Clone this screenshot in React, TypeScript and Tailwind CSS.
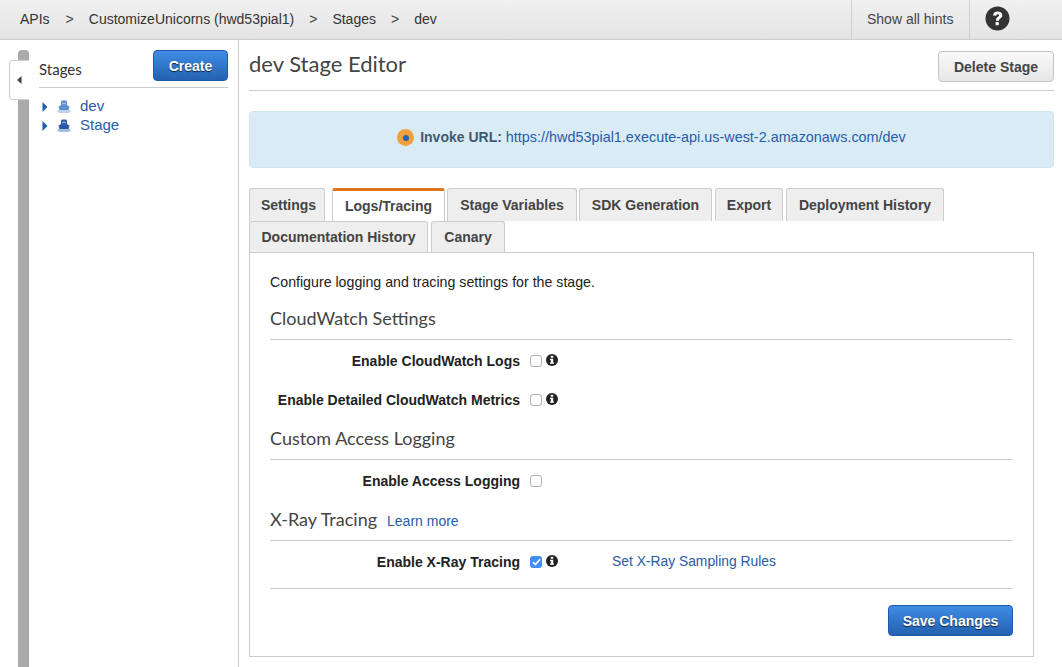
import React from "react";

const sans = "font-['Liberation_Sans',Arial,sans-serif]";
const lato = "font-['Lato',sans-serif]";

const Gt = () => <span className="mx-[15px] text-[14px] text-[#444]">&gt;</span>;

const ShipIcon = ({ color }: { color: string }) => (
  <svg width="14" height="13" viewBox="0 0 14 13" className="shrink-0">
    <path d="M5 0.5h4l1 1.2v3.4l2.5 1.6L11.5 10h-9L1.5 6.7 4 5.1V1.7z" fill={color} />
    <path d="M5.2 2.8h3.6v1.4H5.2z" fill="#fff" opacity="0.5" />
    <path d="M0.5 10.5h13v1h-13z" fill={color} opacity="0.8" />
    <path d="M1.5 12h11v0.8h-11z" fill={color} opacity="0.5" />
  </svg>
);

const TreeRow = ({ label, color }: { label: string; color: string }) => (
  <div className={`flex items-center h-[19px] ${sans}`}>
    <svg width="6" height="10" viewBox="0 0 6 10" className="ml-[3px] mr-[9px] shrink-0">
      <path d="M0.5 0L5.5 5L0.5 10z" fill="#1f5fa8" />
    </svg>
    <ShipIcon color={color} />
    <span className="ml-[9px] text-[15px] text-[#2a5ba8]">{label}</span>
  </div>
);

const InfoIcon = () => (
  <svg width="12" height="12" viewBox="0 0 12 12" className="shrink-0">
    <circle cx="6" cy="6" r="6" fill="#222" />
    <rect x="4.8" y="1.7" width="2.4" height="2.1" rx="0.5" fill="#fff" />
    <path d="M4 4.7h3.2v3.9h0.8v1.2H4V8.6h0.8V5.9H4z" fill="#fff" />
  </svg>
);

const Checkbox = ({ checked }: { checked?: boolean }) =>
  checked ? (
    <span className="w-[12px] h-[12px] rounded-[3px] bg-[#3f8ef0] flex items-center justify-center shrink-0">
      <svg width="9" height="8" viewBox="0 0 9 8">
        <path d="M1 4.2L3.4 6.5L8 1.2" stroke="#fff" strokeWidth="1.6" fill="none" />
      </svg>
    </span>
  ) : (
    <span className="w-[12px] h-[12px] rounded-[3px] border border-[#b0b0b0] bg-white shrink-0" />
  );

const SettingRow = ({
  label,
  checked,
  info,
  className,
  children,
}: {
  label: string;
  checked?: boolean;
  info?: boolean;
  className: string;
  children?: React.ReactNode;
}) => (
  <div className={`flex items-center h-[20px] ${className}`}>
    <div className="w-[250px] text-right text-[14px] font-bold text-[#222] shrink-0">{label}</div>
    <div className="ml-[10px] flex items-center">
      <Checkbox checked={checked} />
      {info && (
        <span className="ml-[4px] -mt-[2px]">
          <InfoIcon />
        </span>
      )}
    </div>
    {children}
  </div>
);

const Tab = ({ label, className, active }: { label: string; className: string; active?: boolean }) =>
  active ? (
    <div
      className={`${className} border-x border-[#ccc] border-t-[3px] border-t-[#dd7417] bg-white rounded-t-[3px] -mb-px relative z-10 flex items-center justify-center text-[14px] font-bold text-[#444]`}
    >
      {label}
    </div>
  ) : (
    <div
      className={`${className} border border-b-0 border-[#ccc] bg-[#eee] rounded-t-[3px] flex items-center justify-center text-[14px] font-bold text-[#444]`}
    >
      {label}
    </div>
  );

const blueBtn =
  "rounded-[4px] border border-[#1f5aa6] bg-gradient-to-b from-[#3f8de6] to-[#2461b0] text-white font-bold text-[14px] pt-[2px] [text-shadow:0_1px_1px_rgba(0,0,0,0.7)] flex items-center justify-center";

const sectionTitle = `border-b border-[#ccc] text-[18px] leading-[24px] text-[#444] ${lato}`;

export default function App() {
  return (
    <div className={`w-[1062px] h-[667px] overflow-hidden bg-white flex flex-col ${sans}`}>
      {/* breadcrumb bar */}
      <div className="h-[40px] shrink-0 flex items-stretch border-b border-[#ccc] bg-gradient-to-b from-[#f0f0f0] to-[#e4e4e4]">
        <div className="flex-1 flex items-center pl-[20px] text-[14px] text-[#333]">
          <span className="mr-[1px]">APIs</span>
          <Gt />
          <span>CustomizeUnicorns (hwd53pial1)</span>
          <Gt />
          <span>Stages</span>
          <Gt />
          <span>dev</span>
        </div>
        <div className="w-[118px] border-l border-[#d0d0d0] flex items-center pl-[15px] text-[14px] text-[#444]">
          Show all hints
        </div>
        <div className="w-[93px] border-l border-[#d0d0d0] flex items-center pl-[15px] pb-[2px]">
          <svg width="25" height="25" viewBox="0 0 25 25">
            <circle cx="12.5" cy="12.5" r="12" fill="#333" />
            <path
              d="M8 9.6c0-2.7 2-4.2 4.7-4.2 2.7 0 4.6 1.6 4.6 3.9 0 1.7-1 2.6-2.1 3.3-.8.6-1.1.9-1.1 1.7v.4h-3.1v-.7c0-1.5.7-2.3 1.7-3 .8-.6 1.3-1 1.3-1.6 0-.7-.6-1.2-1.3-1.2-.9 0-1.4.6-1.5 1.6z"
              fill="#fff"
            />
            <rect x="10.6" y="16" width="3.2" height="3.2" rx="0.4" fill="#fff" />
          </svg>
        </div>
      </div>

      <div className="flex-1 flex min-h-0">
        {/* collapse rail */}
        <div className="relative w-[39px] shrink-0 pl-[18px] pt-[10px]">
          <div className="w-[11px] h-full bg-[#aaa] rounded-t-[4px]" />
          <div className="absolute left-[9px] top-[20px] w-[20px] h-[40px] bg-white border border-r-0 border-[#ccc] rounded-l-[4px] flex items-center justify-center">
            <svg width="5" height="8" viewBox="0 0 5 8">
              <path d="M4.5 0L0 4L4.5 8z" fill="#444" />
            </svg>
          </div>
        </div>

        {/* stages list */}
        <div className="w-[200px] shrink-0 border-r border-[#ccc] pr-[10px]">
          <div className="w-[189px] h-[38px] mt-[10px] flex items-start justify-between border-b border-[#ccc]">
            <span className={`mt-[8px] text-[15px] leading-[22px] text-[#333] ${lato}`}>Stages</span>
            <button className={`${blueBtn} w-[75px] h-[31px]`}>Create</button>
          </div>
          <div className="mt-[9px]">
            <TreeRow label="dev" color="#5b8fd0" />
            <TreeRow label="Stage" color="#2a5ba8" />
          </div>
        </div>

        {/* editor */}
        <div className="flex-1 min-w-0 pl-[10px] pr-[8px]">
          <div className="h-[41px] mt-[10px] flex justify-between items-start border-b border-[#ccc]">
            <h1 className={`text-[22px] leading-[28px] text-[#444] ${lato}`}>dev Stage Editor</h1>
            <button className="mt-[1px] w-[116px] h-[31px] pt-[2px] rounded-[4px] border border-[#c4c4c4] bg-gradient-to-b from-[#fafafa] to-[#e6e6e6] text-[14px] font-bold text-[#444]">
              Delete Stage
            </button>
          </div>

          <div className="mt-[20px] h-[57px] rounded-[4px] border border-[#cfe6f1] bg-[#d9ecf6] flex items-center justify-center text-[14px] pb-[4px]">
            <span className="w-[17px] h-[17px] rounded-full bg-[#f0a03c] flex items-center justify-center mr-[6px]">
              <span className="w-[6px] h-[6px] rounded-full bg-[#2461b0]" />
            </span>
            <span className="font-bold text-[#3f5a70]">Invoke URL:</span>
            <span className="ml-[4px] text-[14.4px] text-[#2a5ba8]">
              https://hwd53pial1.execute-api.us-west-2.amazonaws.com/dev
            </span>
          </div>

          {/* tabs */}
          <div className="mt-[20px]">
            <div className="flex">
              <Tab label="Settings" className="w-[76px] h-[33px] pl-[3px]" />
              <div className="w-[7px]" />
              <Tab label="Logs/Tracing" className="w-[113px] h-[33px]" active />
              <div className="w-[2px]" />
              <Tab label="Stage Variables" className="w-[130px] h-[33px]" />
              <div className="w-[2px]" />
              <Tab label="SDK Generation" className="w-[133px] h-[33px]" />
              <div className="w-[3px]" />
              <Tab label="Export" className="w-[68px] h-[33px]" />
              <div className="w-[3px]" />
              <Tab label="Deployment History" className="w-[158px] h-[33px]" />
            </div>
            <div className="flex">
              <Tab label="Documentation History" className="w-[179px] h-[31px]" />
              <div className="w-[3px]" />
              <Tab label="Canary" className="w-[74px] h-[31px]" />
            </div>
          </div>

          <div className="w-[785px] h-[405px] border border-[#ccc] px-[20px] pt-[20px]">
            <p className="text-[14.2px] leading-[18px] text-[#222]">Configure logging and tracing settings for the stage.</p>

            <div className={`mt-[15px] h-[34px] ${sectionTitle}`}>CloudWatch Settings</div>
            <SettingRow className="mt-[11px]" label="Enable CloudWatch Logs" info />
            <SettingRow className="mt-[19px]" label="Enable Detailed CloudWatch Metrics" info />

            <div className={`mt-[16px] h-[34px] ${sectionTitle}`}>Custom Access Logging</div>
            <SettingRow className="mt-[11px]" label="Enable Access Logging" />

            <div className={`mt-[16px] h-[34px] ${sectionTitle}`}>
              X-Ray Tracing
              <span className={`ml-[10px] text-[14px] text-[#2a5ba8] ${sans}`}>Learn more</span>
            </div>
            <SettingRow className="mt-[11px]" label="Enable X-Ray Tracing" checked info>
              <span className="ml-[54px] -mt-[2px] text-[13.85px] text-[#2a5ba8]">Set X-Ray Sampling Rules</span>
            </SettingRow>

            <div className="mt-[16px] border-t border-[#ccc] flex justify-end pt-[16px]">
              <button className={`${blueBtn} w-[125px] h-[31px]`}>Save Changes</button>
            </div>
          </div>
        </div>
      </div>
    </div>
  );
}
